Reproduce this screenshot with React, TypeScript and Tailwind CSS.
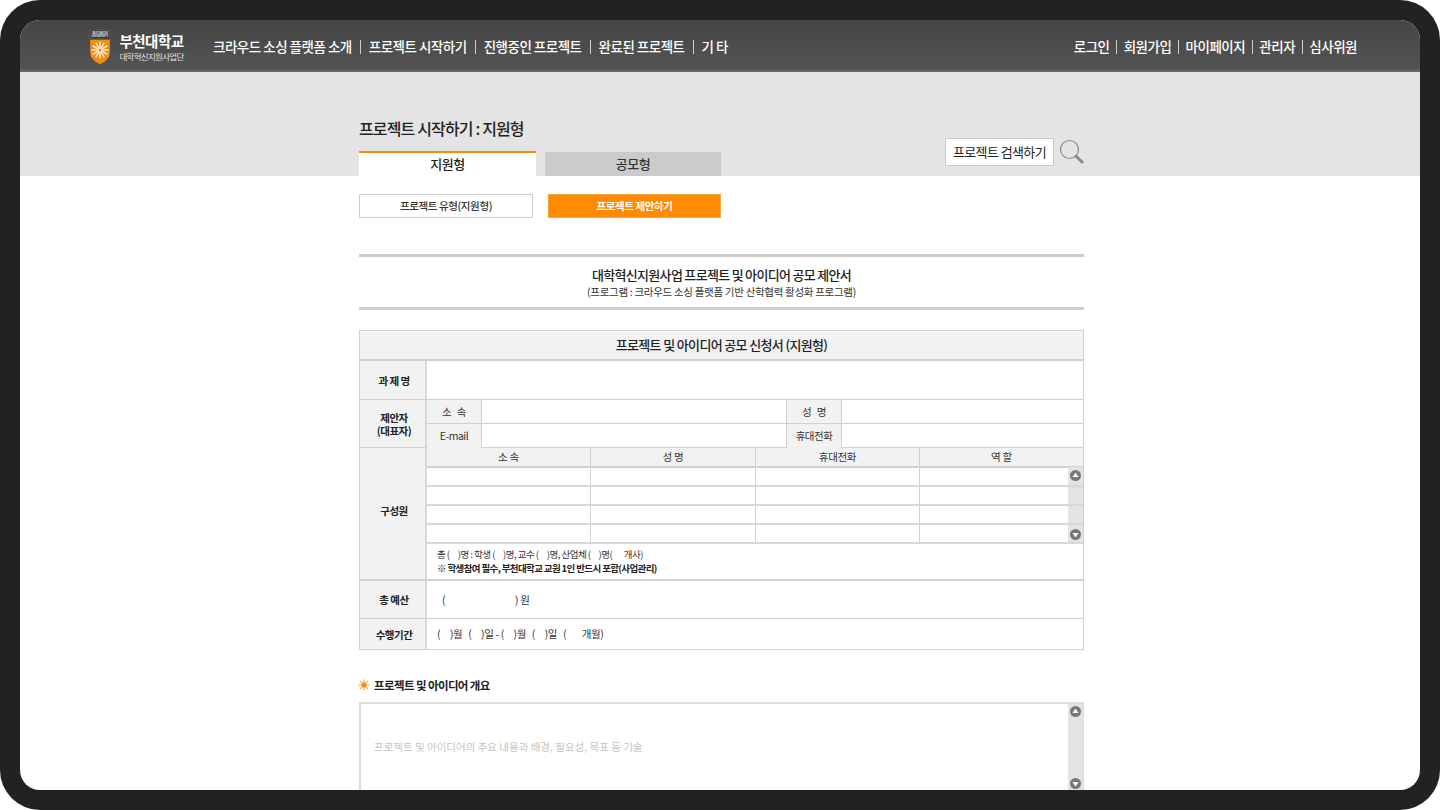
const font = { fontFamily: '"Noto Sans CJK KR", "Noto Sans", sans-serif' };

const navLeft = ['크라우드 소싱 플랫폼 소개', '프로젝트 시작하기', '진행중인 프로젝트', '완료된 프로젝트', '기 타'];
const navRight = ['로그인', '회원가입', '마이페이지', '관리자', '심사위원'];

function Logo() {
  const spokes = [0, 30, 60, 90, 120, 150, 180, 210, 240, 270, 300, 330];
  return (
    <svg width="22" height="36" viewBox="0 0 22 36" className="shrink-0">
      <path d="M1 1.5 Q11 -0.5 21 1.5 L21 10 L1 10 Z" fill="#3a3a3a" stroke="#777" strokeWidth="0.5" />
      <text x="11" y="4.6" textAnchor="middle" fontSize="3" fontWeight="700" fill="#e5e5e5" fontFamily="Liberation Sans, sans-serif">BUCHEON</text>
      <text x="11" y="8.4" textAnchor="middle" fontSize="2.8" fontWeight="700" fill="#e5e5e5" fontFamily="Liberation Sans, sans-serif">UNIVERSITY</text>
      <path d="M1 10.5 H21 V24 Q21 31 11 35.5 Q1 31 1 24 Z" fill="#f28c12" stroke="#555" strokeWidth="0.5" />
      {spokes.map((a) => (
        <line key={a} x1="11" y1="21" x2="11" y2="12.5" stroke="#ffe9c9" strokeWidth="1.5" transform={`rotate(${a} 11 21)`} />
      ))}
      <circle cx="11" cy="21" r="1.6" fill="#f28c12" />
    </svg>
  );
}

function NavList({ items, gap }: { items: string[]; gap: string }) {
  return (
    <ul className="flex items-center">
      {items.map((item, i) => (
        <li key={item} className="flex items-center">
          {i > 0 && <span className={`${gap} h-[14px] w-px bg-[#cfcfcf]`} />}
          <span className="text-[13.5px] font-medium tracking-[-0.5px] whitespace-nowrap text-white">{item}</span>
        </li>
      ))}
    </ul>
  );
}

function ScrollArrow({ down }: { down?: boolean }) {
  return (
    <svg width="11" height="11" viewBox="0 0 11 11">
      <circle cx="5.5" cy="5.5" r="5.5" fill="#777" />
      <path d={down ? 'M2.5 4 H8.5 L5.5 8.5 Z' : 'M2.5 7 H8.5 L5.5 2.5 Z'} fill="#fff" />
    </svg>
  );
}

function ScrollBar({ pad }: { pad: string }) {
  return (
    <div className={`flex h-full w-[15px] flex-col items-center justify-between bg-[#e3e3e3] ${pad}`}>
      <ScrollArrow />
      <ScrollArrow down />
    </div>
  );
}

function RowLabel({ children, className = '' }: { children: React.ReactNode; className?: string }) {
  return (
    <div className={`flex w-[67px] shrink-0 items-center justify-center border-r-2 border-[#d8d8d8] bg-[#f2f2f2] pl-[3px] text-center text-[10.5px] leading-[13px] font-bold tracking-[-0.5px] text-[#222] ${className}`}>
      <span>{children}</span>
    </div>
  );
}

function SubRow({ a, b, last }: { a: string; b: string; last?: boolean }) {
  return (
    <div className={`flex h-[24px] ${last ? '' : 'border-b border-[#d0d0d0]'}`}>
      <div className="flex w-[55px] items-center justify-center border-r border-[#d0d0d0] bg-[#f2f2f2] text-[10.5px] tracking-[-0.5px] whitespace-pre text-[#333]">{a}</div>
      <div className="w-[305px] border-r border-[#d0d0d0]" />
      <div className="flex w-[55px] items-center justify-center border-r border-[#d0d0d0] bg-[#f2f2f2] text-[10.5px] tracking-[-0.5px] whitespace-pre text-[#333]">{b}</div>
      <div className="flex-1" />
    </div>
  );
}

function MemberTable() {
  const heads = ['소 속', '성 명', '휴대전화', '역 할'];
  const cols = 'grid grid-cols-[164px_165px_164px_1fr]';
  return (
    <div className="relative">
      <div className={`${cols} h-[20px] border-b-2 border-[#d0d0d0] bg-[#f2f2f2]`}>
        {heads.map((h, i) => (
          <div key={h} className={`flex items-center justify-center text-[10.5px] tracking-[-0.3px] text-[#333] ${i < 3 ? 'border-r border-[#d0d0d0]' : ''}`}>
            {h}
          </div>
        ))}
      </div>
      <div className="absolute top-[19px] right-0 h-[76px]">
        <ScrollBar pad="py-[3px]" />
      </div>
      {[0, 1, 2, 3].map((r) => (
        <div key={r} className={`${cols} relative z-10 h-[19px] border-b-2 border-[#d8d8d8]`}>
          <div className="border-r border-[#d0d0d0]" />
          <div className="border-r border-[#d0d0d0]" />
          <div className="border-r border-[#d0d0d0]" />
          <div />
        </div>
      ))}
    </div>
  );
}

export default function App() {
  return (
    <div className="h-[810px] w-[1440px] overflow-hidden rounded-[40px] bg-[#222222] p-[20px]" style={font}>
      <div className="h-[770px] overflow-hidden rounded-[20px] bg-white">
        <header className="flex h-[52px] items-center justify-between border-b-2 border-[#666] bg-gradient-to-b from-[#444444] to-[#555555] pt-[3px] pr-[63px] pl-[69px]">
          <div className="flex items-center">
            <Logo />
            <div className="ml-[7px] w-[67px] text-center">
              <div className="text-[14.5px] leading-[18px] font-bold tracking-[-0.5px] whitespace-nowrap text-white">부천대학교</div>
              <div className="text-[8.5px] leading-[12px] tracking-[-0.7px] whitespace-nowrap text-[#e0e0e0]">대학혁신지원사업단</div>
            </div>
            <div className="ml-[28px]">
              <NavList items={navLeft} gap="mx-[8px]" />
            </div>
          </div>
          <NavList items={navRight} gap="mx-[6.6px]" />
        </header>

        <section className="h-[104px] bg-[#e4e4e4]">
          <div className="ml-[339px] flex h-full w-[725px] items-end justify-between">
            <div>
              <h1 className="mb-[11px] text-[16px] leading-[24px] font-medium tracking-[-0.85px] text-[#222]">프로젝트 시작하기 : 지원형</h1>
              <div className="flex items-end gap-[9px]">
                <div className="flex h-[25px] w-[177px] items-center justify-center border-t-2 border-[#ff8c00] bg-white pb-[2px] text-[13px] font-medium tracking-[-0.5px] text-[#222]">지원형</div>
                <div className="flex h-[24px] w-[176px] items-center justify-center bg-[#cbcbcb] text-[13px] font-medium tracking-[-0.5px] text-[#333]">공모형</div>
              </div>
            </div>
            <div className="mb-[10px] flex items-center gap-[5px]">
              <div className="flex h-[28px] w-[109px] items-center justify-center border border-[#cccccc] bg-white text-[13px] tracking-[-0.6px] text-[#222]">프로젝트 검색하기</div>
              <svg width="25" height="26" viewBox="0 0 25 26" fill="none">
                <circle cx="10.5" cy="10.5" r="9" stroke="#8a8a8a" strokeWidth="1.2" />
                <path d="M17 17 L23 23" stroke="#8a8a8a" strokeWidth="3" strokeLinecap="round" />
              </svg>
            </div>
          </div>
        </section>

        <main className="ml-[339px] w-[725px]">
          <div className="mt-[18px] flex gap-[15px]">
            <div className="flex h-[24px] w-[174px] items-center justify-center border border-[#cccccc] text-[10.5px] font-medium tracking-[-0.4px] text-[#333]">프로젝트 유형(지원형)</div>
            <div className="flex h-[24px] w-[173px] items-center justify-center border border-[#f9a440] bg-[#ff8c00] text-[10.5px] font-bold tracking-[-0.4px] text-white">프로젝트 제안하기</div>
          </div>

          <div className="mt-[36px] h-[56px] border-y-[3px] border-[#cccccc] text-center">
            <div className="mt-[9px] text-[13px] leading-[18px] font-medium tracking-[-0.7px] text-[#222]">대학혁신지원사업 프로젝트 및 아이디어 공모 제안서</div>
            <div className="text-[10.5px] leading-[15px] tracking-[-0.3px] text-[#333]">(프로그램 : 크라우드 소싱 플랫폼 기반 산학협력 활성화 프로그램)</div>
          </div>

          <div className="mt-[20px] h-[320px] border border-[#d0d0d0]">
            <div className="flex h-[30px] items-center justify-center border-b-2 border-[#d0d0d0] bg-[#f2f2f2] text-[13px] font-medium tracking-[-0.65px] text-[#222]">프로젝트 및 아이디어 공모 신청서 (지원형)</div>
            <div className="flex h-[39px] border-b border-[#d0d0d0]">
              <RowLabel>과 제 명</RowLabel>
            </div>
            <div className="flex h-[48px] border-b border-[#d0d0d0]">
              <RowLabel>
                제안자
                <br />
                (대표자)
              </RowLabel>
              <div className="flex-1">
                <SubRow a={'소   속'} b={'성   명'} />
                <SubRow a="E-mail" b="휴대전화" last />
              </div>
            </div>
            <div className="flex h-[133px] border-b-2 border-[#d0d0d0]">
              <RowLabel className="pb-[6px]">구성원</RowLabel>
              <div className="flex-1">
                <MemberTable />
                <div className="mt-[3px] pl-[10px] text-[9.5px] leading-[14px] tracking-[-0.5px] whitespace-pre text-[#333]">
                  <div>{'총 (     )명 : 학생 (     )명, 교수 (     )명, 산업체 (     )명(       개사)'}</div>
                  <div className="font-bold tracking-[-0.62px] text-[#222]">※ 학생참여 필수, 부천대학교 교원 1인 반드시 포함(사업관리)</div>
                </div>
              </div>
            </div>
            <div className="flex h-[38px] border-b border-[#d0d0d0]">
              <RowLabel>총 예산</RowLabel>
              <div className="flex items-center pl-[15px] text-[10.5px] tracking-[-0.3px] whitespace-pre text-[#333]">{'(                                  ) 원'}</div>
            </div>
            <div className="flex h-[30px]">
              <RowLabel>수행기간</RowLabel>
              <div className="flex items-center pb-[1px] pl-[10px] text-[10.5px] tracking-[-0.4px] whitespace-pre text-[#333]">{'(     )월   (     )일 - (     )월   (     )일   (        개월)'}</div>
            </div>
          </div>

          <div className="mt-[25px] flex h-[20px] items-center">
            <svg width="12" height="12" viewBox="0 0 12 12" className="mr-[4px] -ml-[1px]">
              {[0, 45, 90, 135, 180, 225, 270, 315].map((a) => (
                <line key={a} x1="6" y1="6" x2="6" y2="0.5" stroke="#fbb45e" strokeWidth="1.4" transform={`rotate(${a} 6 6)`} />
              ))}
              <circle cx="6" cy="6" r="2.4" fill="#f58a0f" />
            </svg>
            <h2 className="pt-[1px] text-[11.5px] font-bold tracking-[-0.6px] text-[#222]">프로젝트 및 아이디어 개요</h2>
          </div>

          <div className="mt-[7px] flex h-[91px] border-2 border-r border-[#dcdcdc]">
            <div className="flex flex-1 items-center pb-[1px] pl-[13px] text-[10.5px] tracking-[0px] text-[#c4c4c4]">프로젝트 및 아이디어의 주요 내용과 배경, 필요성, 목표 등 기술</div>
            <ScrollBar pad="py-[2px]" />
          </div>
        </main>
      </div>
    </div>
  );
}
